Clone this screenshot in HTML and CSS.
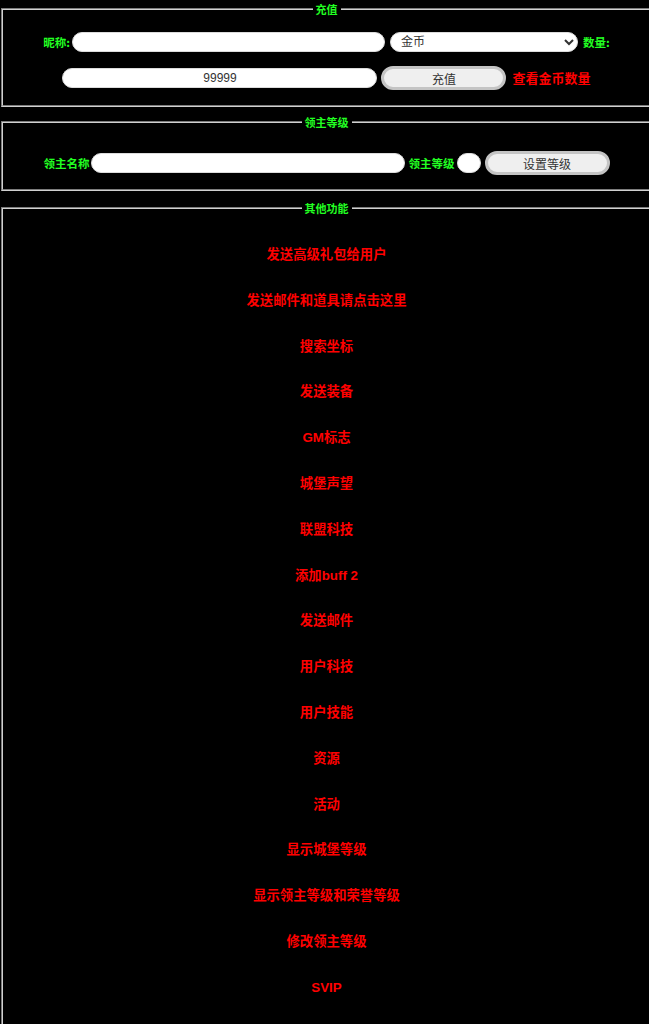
FILE: index.html
```html
<!DOCTYPE html>
<html lang="zh-CN">
<head>
<meta charset="utf-8">
<title>GM</title>
<link rel="stylesheet" href="styles.css">
</head>
<body>
<fieldset class="box box-pay">
  <legend class="legend">充值</legend>
  <div class="row row-a">
    <span class="label">昵称:</span>
    <input class="field field-name" type="text">
    <select class="pick"><option>金币</option></select>
    <span class="label">数量:</span>
  </div>
  <div class="row row-b">
    <input class="field field-num" type="text" value="99999">
    <button class="btn">充值</button>
    <span class="warn">查看金币数量</span>
  </div>
</fieldset>

<fieldset class="box box-lord">
  <legend class="legend">领主等级</legend>
  <div class="row row-c">
    <span class="label">领主名称</span>
    <input class="field field-lord" type="text">
    <span class="label label-lv">领主等级</span>
    <input class="field field-lv" type="text">
    <button class="btn btn-lv">设置等级</button>
  </div>
</fieldset>

<fieldset class="box box-more">
  <legend class="legend">其他功能</legend>
  <div class="links">
    <div class="link">发送高级礼包给用户</div>
    <div class="link">发送邮件和道具请点击这里</div>
    <div class="link">搜索坐标</div>
    <div class="link">发送装备</div>
    <div class="link">GM标志</div>
    <div class="link">城堡声望</div>
    <div class="link">联盟科技</div>
    <div class="link">添加buff 2</div>
    <div class="link">发送邮件</div>
    <div class="link">用户科技</div>
    <div class="link">用户技能</div>
    <div class="link">资源</div>
    <div class="link">活动</div>
    <div class="link">显示城堡等级</div>
    <div class="link">显示领主等级和荣誉等级</div>
    <div class="link">修改领主等级</div>
    <div class="link">SVIP</div>
  </div>
</fieldset>
</body>
</html>
```

FILE: styles.css
```css
html, body {
  margin: 0;
  padding: 0;
  background: #000;
  overflow-x: hidden;
}

body {
  font-family: "Liberation Sans", "Noto Sans CJK SC", sans-serif;
}

.box {
  box-sizing: border-box;
  width: 651px;
  margin: 1px 0 0 1px;
  padding: 15px 0 15px 0;
  border: 2px groove #d0d0d0;
  min-width: 0;
}

.box-lord {
  margin-top: 7px;
  padding: 21px 0 14px 0;
}

.box-more {
  margin-top: 9px;
  padding: 16px 0 40px 0;
}

.legend {
  margin: 0 auto;
  padding: 0 3px;
  font-family: "Noto Sans CJK SC", sans-serif;
  font-weight: 700;
  font-size: 11px;
  line-height: 16px;
  color: #22ff22;
}

.row {
  display: flex;
  align-items: center;
  justify-content: center;
}

.row-a {
  height: 20px;
}

.row-b {
  height: 24px;
  margin-top: 14px;
}

.row-c {
  height: 24px;
}

.label {
  font-family: "Noto Sans CJK SC", sans-serif;
  font-weight: 700;
  font-size: 11.5px;
  line-height: 16px;
  color: #22ff22;
  white-space: nowrap;
}

.field {
  box-sizing: border-box;
  height: 20px;
  margin: 0;
  padding: 0 8px;
  border: 1px solid #dcdcdc;
  border-radius: 10px;
  background: #fff;
  font-family: "Liberation Sans", "Noto Sans CJK SC", sans-serif;
  font-size: 12px;
  color: #333;
  outline: none;
}

.field-name {
  width: 313px;
  margin: 0 5px 0 2px;
}

.pick {
  box-sizing: border-box;
  width: 188px;
  height: 20px;
  margin: 0 5px 0 0;
  padding: 0 6px;
  border: 1px solid #dcdcdc;
  border-radius: 10px;
  background: #fff;
  font-family: "Liberation Sans", "Noto Sans CJK SC", sans-serif;
  font-size: 12px;
  color: #333;
}

.field-num {
  width: 315px;
  text-align: center;
  margin-right: 4px;
}

.btn {
  box-sizing: border-box;
  width: 125px;
  height: 24px;
  margin: 0;
  padding: 0;
  border: 3px solid #c4c4c4;
  border-radius: 12px;
  background: #efefef;
  font-family: "Liberation Sans", "Noto Sans CJK SC", sans-serif;
  font-size: 12px;
  color: #333;
}

.warn {
  margin-left: 6px;
  font-family: "Noto Sans CJK SC", sans-serif;
  font-weight: 700;
  font-size: 13px;
  line-height: 16px;
  color: #ff0000;
  white-space: nowrap;
}

.field-lord {
  width: 314px;
  margin: 0 4px 0 1px;
}

.field-lv {
  width: 24px;
  padding: 0;
  margin: 0 4px 0 2px;
}

.links {
  display: flex;
  flex-direction: column;
  align-items: center;
}

.link {
  height: 45.8px;
  line-height: 45.8px;
  font-family: "Liberation Sans", "Noto Sans CJK SC", sans-serif;
  font-weight: 700;
  font-size: 13.33px;
  color: #ff0000;
  white-space: nowrap;
}
```
